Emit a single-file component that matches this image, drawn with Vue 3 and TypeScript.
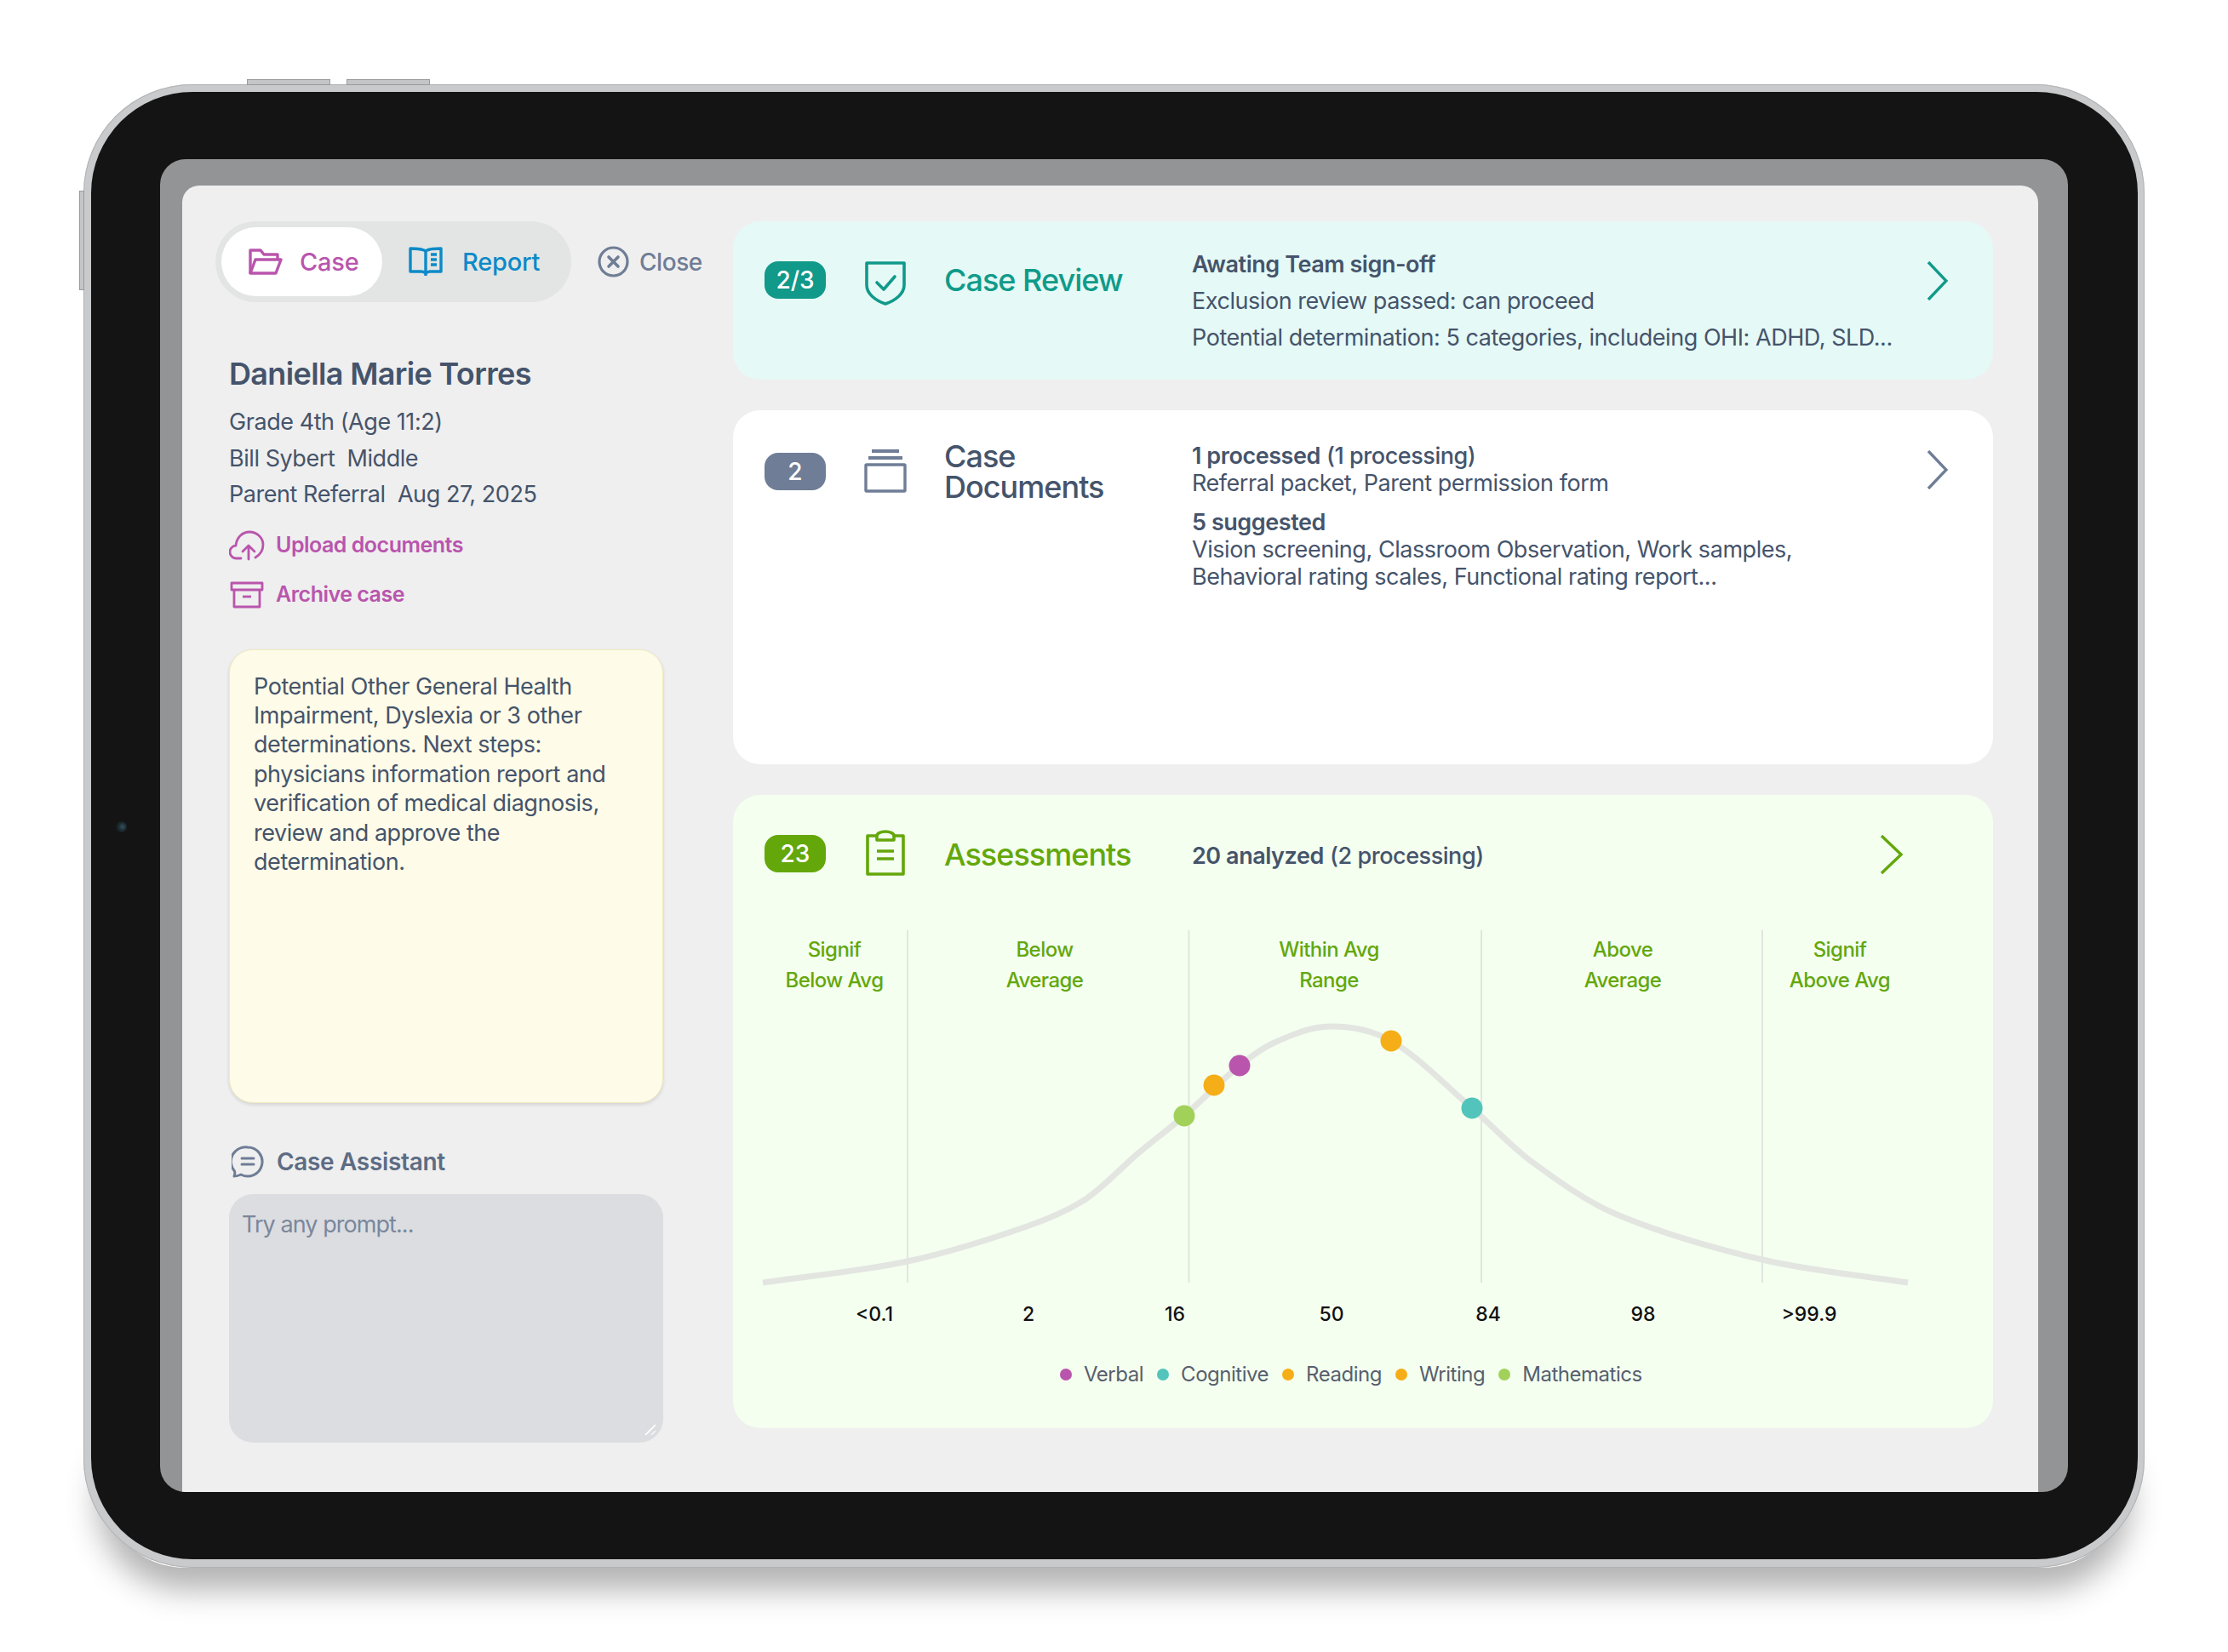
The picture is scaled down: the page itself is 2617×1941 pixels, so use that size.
<script setup lang="ts">
interface Point {
  x: number
  y: number
}

interface ScoreDot extends Point {
  color: string
}

const curvePoints: Point[] = [
  { x: 35, y: 414 },
  { x: 205, y: 389 },
  { x: 345, y: 348 },
  { x: 414, y: 316 },
  { x: 477, y: 261 },
  { x: 530, y: 218 },
  { x: 595, y: 159 },
  { x: 638, y: 131 },
  { x: 701, y: 113 },
  { x: 773, y: 130 },
  { x: 868, y: 209 },
  { x: 937, y: 271 },
  { x: 1036, y: 333 },
  { x: 1209, y: 387 },
  { x: 1380, y: 414 },
]

// hermite spline, tangents from the neighbouring points
const slope = (i: number): number => {
  const a = curvePoints[Math.max(i - 1, 0)]
  const b = curvePoints[Math.min(i + 1, curvePoints.length - 1)]
  return (b.y - a.y) / (b.x - a.x)
}

const curvePath = curvePoints.reduce((d, p, i, pts) => {
  if (i === 0) return `M${p.x} ${p.y}`
  const prev = pts[i - 1]
  const dx = (p.x - prev.x) / 3
  const c1y = prev.y + slope(i - 1) * dx
  const c2y = p.y - slope(i) * dx
  return `${d} C${prev.x + dx} ${c1y} ${p.x - dx} ${c2y} ${p.x} ${p.y}`
}, '')

const dividers = [205, 535.5, 879, 1209]

const dots: ScoreDot[] = [
  { x: 530, y: 218, color: '#a2d15a' },
  { x: 565, y: 182, color: '#f5ae17' },
  { x: 595, y: 159, color: '#b955ad' },
  { x: 773, y: 130, color: '#f5ae17' },
  { x: 868, y: 209, color: '#52c4bb' },
]

const bands = [
  { left: 119, top: 'Signif', bottom: 'Below Avg' },
  { left: 366, top: 'Below', bottom: 'Average' },
  { left: 700, top: 'Within Avg', bottom: 'Range' },
  { left: 1045, top: 'Above', bottom: 'Average' },
  { left: 1300, top: 'Signif', bottom: 'Above Avg' },
]

const ticks = [
  { left: 166, label: '<0.1' },
  { left: 347, label: '2' },
  { left: 519, label: '16' },
  { left: 703, label: '50' },
  { left: 887, label: '84' },
  { left: 1069, label: '98' },
  { left: 1264, label: '>99.9' },
]

const legend = [
  { label: 'Verbal', color: '#b955ad' },
  { label: 'Cognitive', color: '#52c4bb' },
  { label: 'Reading', color: '#f5ae17' },
  { label: 'Writing', color: '#f5ae17' },
  { label: 'Mathematics', color: '#a2d15a' },
]
</script>

<template>
  <div class="page">
    <div class="device">
      <span class="btn btn-top-a"></span>
      <span class="btn btn-top-b"></span>
      <span class="btn btn-side"></span>
      <div class="bezel">
        <span class="camera"></span>
        <div class="screen">
          <div class="app">
            <aside class="side">
              <div class="tabs-row">
                <div class="tabs">
                  <div class="tab tab-active">
                    <svg width="40" height="31" viewBox="0 0 40 31" fill="none" stroke="#b955ad" stroke-width="3.4" stroke-linejoin="round">
                      <path d="M2 29V2h12l4 5h16v6" />
                      <path d="M2 29h30l6-16H8L2 29z" />
                    </svg>
                    <span>Case</span>
                  </div>
                  <div class="tab tab-report">
                    <svg width="40" height="36" viewBox="0 0 40 36" fill="none" stroke="#0c8ac9" stroke-width="3.4" stroke-linejoin="round">
                      <path d="M20 5C16 2 8 2 2 2v27h13c2 0 4 1 5 2 1-1 3-2 5-2h13V2c-6 0-14 0-18 3z" />
                      <path d="M20 5v26M20 31v3" />
                      <path d="M26 9h7M26 15h7M26 21h7" stroke-width="3.6" />
                    </svg>
                    <span>Report</span>
                  </div>
                </div>
                <div class="close">
                  <svg width="37" height="37" viewBox="0 0 37 37" fill="none" stroke="#6f7d96" stroke-width="3.2" stroke-linecap="round">
                    <circle cx="18.5" cy="18.5" r="16.5" />
                    <path d="M13 13l11 11M24 13L13 24" stroke-width="3.6" />
                  </svg>
                  <span>Close</span>
                </div>
              </div>

              <div class="info">
                <h1 class="name">Daniella Marie Torres</h1>
                <p>Grade 4th (Age 11:2)</p>
                <p>Bill Sybert&nbsp; Middle</p>
                <p>Parent Referral&nbsp; Aug 27, 2025</p>
                <div class="link link-upload">
                  <svg width="42" height="36" viewBox="0 0 42 36" fill="none" stroke="#b955ad" stroke-width="2.8" stroke-linecap="round" stroke-linejoin="round">
                    <path d="M14 33H9a7.5 7.5 0 0 1-1-15C9 8 16 2 24 2c9 0 16 7 16 15 0 7-4 12-9 15" />
                    <path d="M23 34V19M16 25l7-7 7 7" />
                  </svg>
                  <span>Upload documents</span>
                </div>
                <div class="link">
                  <svg width="42" height="32" viewBox="0 0 42 32" fill="none" stroke="#b955ad" stroke-width="2.8" stroke-linejoin="round">
                    <rect x="3" y="2" width="36" height="8" />
                    <path d="M6 10v20h30V10" />
                    <path d="M16 18h10" />
                  </svg>
                  <span>Archive case</span>
                </div>
              </div>

              <div class="note">
                Potential Other General Health Impairment, Dyslexia or 3 other determinations. Next steps: physicians information report and verification of medical diagnosis, review and approve the determination.
              </div>

              <div class="assistant-head">
                <svg width="38" height="38" viewBox="0 0 38 38" fill="none" stroke="#6f7d96" stroke-width="3" stroke-linecap="round" stroke-linejoin="round">
                  <path d="M19 2a17 17 0 1 1-8 32c-2 1-5 2-8 2 1-2 1-4 .5-6A17 17 0 0 1 19 2z" />
                  <path d="M12 15h14M12 22h14" />
                </svg>
                <span>Case Assistant</span>
              </div>
              <div class="prompt-wrap">
                <textarea class="prompt" placeholder="Try any prompt..."></textarea>
                <svg class="grip" width="14" height="14" viewBox="0 0 14 14" fill="none" stroke-width="1.6">
                  <path d="M1 13L13 1" stroke="#fff" />
                  <path d="M8 13l5-5" stroke="#f4f4f5" />
                </svg>
              </div>
            </aside>

            <main class="cards">
              <section class="card card-review">
                <span class="badge">2/3</span>
                <svg class="card-icon" width="50" height="52" viewBox="0 0 50 52" fill="none" stroke="#11998a" stroke-width="3.6" stroke-linejoin="round">
                  <path d="M3 2h44v26c0 10-10 18-22 22C13 46 3 38 3 28V2z" />
                  <path d="M15 25l8 8 13-15" stroke-linecap="round" />
                </svg>
                <h2 class="card-title">Case Review</h2>
                <div class="card-body lined">
                  <p class="strong">Awating Team sign-off</p>
                  <p>Exclusion review passed: can proceed</p>
                  <p>Potential determination: 5 categories, includeing OHI: ADHD, SLD...</p>
                </div>
                <svg class="chevron" width="25" height="46" viewBox="0 0 25 46" fill="none" stroke="#11998a" stroke-width="3.4">
                  <path d="M2 1l21 22L2 45" />
                </svg>
              </section>

              <section class="card card-docs">
                <span class="badge">2</span>
                <svg class="card-icon" width="50" height="52" viewBox="0 0 50 52" fill="none" stroke="#6f7d96" stroke-width="3.4">
                  <path d="M9 3h32M5 11h40" stroke-width="3.8" />
                  <rect x="2" y="19" width="46" height="31" rx="1" />
                </svg>
                <h2 class="card-title">Case<br />Documents</h2>
                <div class="card-body tight">
                  <div class="group">
                    <p><b>1 processed</b> <span class="medium">(1 processing)</span></p>
                    <p>Referral packet, Parent permission form</p>
                  </div>
                  <div class="group">
                    <p class="strong">5 suggested</p>
                    <p>Vision screening, Classroom Observation, Work samples,</p>
                    <p>Behavioral rating scales, Functional rating report...</p>
                  </div>
                </div>
                <svg class="chevron" width="25" height="46" viewBox="0 0 25 46" fill="none" stroke="#6f7d96" stroke-width="3.4">
                  <path d="M2 1l21 22L2 45" />
                </svg>
              </section>

              <section class="card-assess">
                <div class="card assess-head">
                  <span class="badge">23</span>
                  <svg class="card-icon" width="50" height="54" viewBox="0 0 50 54" fill="none" stroke="#64a70b" stroke-width="3.6" stroke-linejoin="round">
                    <path d="M15 7H4v45h42V7H35" />
                    <path d="M15 12V7c0-3 5-5 10-5s10 2 10 5v5H15z" />
                    <path d="M15 25h20M15 34h20" />
                  </svg>
                  <h2 class="card-title">Assessments</h2>
                  <div class="card-body assess-body">
                    <p><b>20 analyzed</b> <span class="medium">(2 processing)</span></p>
                  </div>
                  <svg class="chevron" width="27" height="46" viewBox="0 0 27 46" fill="none" stroke="#64a70b" stroke-width="3.4">
                    <path d="M2 1l23 22L2 45" />
                  </svg>
                </div>

                <div class="chart">
                  <svg class="chart-svg" width="1480" height="478" viewBox="0 0 1480 478" fill="none">
                    <line v-for="x in dividers" :key="x" :x1="x" :x2="x" y1="0" y2="414" stroke="#e2e5e0" stroke-width="2" />
                    <path :d="curvePath" stroke="#e3e5e1" stroke-width="7" />
                    <circle v-for="d in dots" :key="d.x" :cx="d.x" :cy="d.y" r="12.5" :fill="d.color" />
                  </svg>
                  <div v-for="b in bands" :key="b.left" class="band" :style="{ left: b.left + 'px' }">
                    {{ b.top }}<br />{{ b.bottom }}
                  </div>
                  <div v-for="t in ticks" :key="t.label" class="tick" :style="{ left: t.left + 'px' }">{{ t.label }}</div>
                </div>

                <ul class="legend">
                  <li v-for="l in legend" :key="l.label">
                    <i :style="{ background: l.color }"></i>{{ l.label }}
                  </li>
                </ul>
              </section>
            </main>
          </div>
        </div>
      </div>
    </div>
  </div>
</template>

<style>
body {
  margin: 0;
  background: #fff;
}
</style>

<style scoped>
.page {
  width: 2617px;
  height: 1941px;
  padding: 99px 0 0 98px;
  box-sizing: border-box;
  overflow: hidden;
  font-family: Inter, 'Liberation Sans', sans-serif;
  letter-spacing: -0.028em;
  color: #45546b;
}
.device {
  position: relative;
  width: 2421px;
  height: 1743px;
  padding: 9px 8px 10px 9px;
  box-sizing: border-box;
  border-radius: 128px;
  background: #c9cacb;
  box-shadow: inset 0 0 0 1px #b2b3b5;
}
.device::before {
  content: '';
  position: absolute;
  z-index: -1;
  left: 20px;
  right: 20px;
  bottom: 0;
  height: 200px;
  border-radius: 120px;
  box-shadow: 0 22px 36px 4px rgba(0, 0, 0, 0.3);
}
.btn {
  position: absolute;
  background: #c4c5c7;
  border: 1px solid #9a9b9d;
  box-sizing: border-box;
}
.btn-top-a {
  left: 192px;
  top: -6px;
  width: 98px;
  height: 7px;
}
.btn-top-b {
  left: 309px;
  top: -6px;
  width: 98px;
  height: 7px;
}
.btn-side {
  left: -5px;
  top: 125px;
  width: 6px;
  height: 117px;
}
.bezel {
  position: relative;
  height: 100%;
  box-sizing: border-box;
  padding: 79px 82px 79px 81px;
  border-radius: 119px;
  background: #141414;
}
.camera {
  position: absolute;
  left: 29px;
  top: 857px;
  width: 13px;
  height: 13px;
  border-radius: 50%;
  background: radial-gradient(circle at 60% 50%, #35505c 0, #1d2a30 45%, #0d0d0d 100%);
}
.screen {
  height: 100%;
  box-sizing: border-box;
  padding: 31px 35px 0 26px;
  border-radius: 30px;
  background: #939495;
  overflow: hidden;
}
.app {
  display: flex;
  height: 100%;
  box-sizing: border-box;
  padding: 42px 53px 0 39px;
  border-radius: 20px 20px 0 0;
  background: #efefef;
}

/* left column */
.side {
  width: 608px;
  flex: none;
}
.tabs-row {
  display: flex;
  align-items: center;
  height: 95px;
}
.tabs {
  display: flex;
  align-items: center;
  width: 418px;
  height: 95px;
  padding-left: 7px;
  box-sizing: border-box;
  border-radius: 48px;
  background: #e2e5e3;
}
.tab {
  display: flex;
  align-items: center;
  height: 81px;
  font-size: 29px;
  font-weight: 500;
  letter-spacing: -0.008em;
}
.tab-active {
  width: 189px;
  padding-left: 32px;
  gap: 20px;
  box-sizing: border-box;
  border-radius: 41px;
  background: #fff;
  color: #b955ad;
}
.tab-report {
  padding-left: 31px;
  gap: 23px;
  color: #0c8ac9;
}
.close {
  display: flex;
  align-items: center;
  gap: 12px;
  margin-left: 31px;
  font-size: 28px;
  font-weight: 500;
  color: #6f7d96;
}
.info {
  padding-left: 16px;
  margin-top: 62px;
  font-size: 27px;
  line-height: 42.5px;
}
.info p {
  margin: 0;
}
.name {
  margin: 0 0 14px;
  font-size: 36px;
  line-height: 44px;
  font-weight: 600;
  letter-spacing: -0.018em;
}
.link {
  display: flex;
  align-items: center;
  gap: 13px;
  height: 40px;
  margin-top: 18px;
  font-size: 25px;
  font-weight: 600;
  letter-spacing: -0.02em;
  color: #b955ad;
}
.note {
  width: 510px;
  height: 533px;
  margin: 44px 0 0 16px;
  padding: 26px 28px;
  box-sizing: border-box;
  border: 1px solid #f1ebbf;
  border-radius: 28px;
  background: #fefbe8;
  box-shadow: 0 2px 4px rgba(0, 0, 0, 0.12);
  font-size: 27px;
  line-height: 34.4px;
}
.assistant-head {
  display: flex;
  align-items: center;
  gap: 15px;
  height: 40px;
  margin: 49px 0 18px 19px;
  font-size: 28px;
  font-weight: 600;
  letter-spacing: -0.012em;
  color: #5d6c84;
}
.prompt-wrap {
  position: relative;
  width: 510px;
  height: 292px;
  margin-left: 16px;
}
.prompt {
  display: block;
  width: 100%;
  height: 100%;
  padding: 19px 15px;
  box-sizing: border-box;
  border: 0;
  border-radius: 28px;
  outline: none;
  resize: none;
  background: #dcdde0;
  font-family: inherit;
  font-size: 27px;
  line-height: 34px;
  letter-spacing: -0.035em;
  color: #45546b;
}
.prompt::placeholder {
  color: #7b879c;
}
.grip {
  position: absolute;
  right: 8px;
  bottom: 8px;
}

/* right column */
.cards {
  width: 1480px;
  flex: none;
  display: flex;
  flex-direction: column;
  gap: 36px;
}
.card {
  display: flex;
  align-items: flex-start;
  padding-left: 37px;
  padding-right: 53px;
}
.card-review {
  height: 186px;
  box-sizing: border-box;
  padding-top: 47px;
  border-radius: 32px;
  background: #e5f9f6;
}
.card-docs {
  height: 416px;
  box-sizing: border-box;
  padding-top: 50px;
  border-radius: 32px;
  background: #fff;
}
.card-assess {
  height: 744px;
  box-sizing: border-box;
  padding-top: 47px;
  border-radius: 32px;
  background: #f4fff0;
}
.badge {
  flex: none;
  width: 72px;
  height: 44px;
  border-radius: 16px;
  text-align: center;
  font-size: 28px;
  line-height: 44px;
  font-weight: 500;
  letter-spacing: 0;
  color: #fff;
}
.card-review .badge {
  background: #11998a;
}
.card-docs .badge {
  background: #6f7d96;
}
.assess-head .badge {
  background: #64a70b;
}
.card-icon {
  flex: none;
  margin-left: 45px;
}
.card-docs .card-icon {
  margin-top: -5px;
}
.card-title {
  flex: none;
  width: 291px;
  margin: 0 0 0 44px;
  font-size: 36px;
  line-height: 36px;
  font-weight: 500;
  letter-spacing: -0.027em;
}
.card-review .card-title {
  padding-top: 4px;
  color: #0f9b8a;
}
.card-docs .card-title {
  margin-top: -14px;
  color: #45546b;
}
.card-body {
  flex: 1;
  font-size: 27px;
  min-width: 0;
}
.card-body p {
  margin: 0;
}
.lined {
  margin-top: -18px;
  line-height: 43px;
}
.tight {
  margin-top: -12px;
  line-height: 32px;
}
.group + .group {
  margin-top: 14px;
}
.strong,
b {
  font-weight: 600;
}
.medium {
  font-weight: 500;
}
.chevron {
  flex: none;
}
.card-docs .chevron {
  margin-top: -3px;
}
.assess-head {
  height: 46px;
  padding-right: 106px;
}
.assess-head .card-title {
  padding-top: 5px;
  color: #64a70b;
}
.assess-body {
  padding-top: 9px;
  line-height: 32px;
  font-size: 27px;
}
.assess-head .card-icon {
  margin-top: -6px;
}
.chart {
  position: relative;
  height: 478px;
  margin-top: 66px;
}
.chart-svg {
  position: absolute;
  left: 0;
  top: 0;
}
.band {
  position: absolute;
  top: 5px;
  transform: translateX(-50%);
  white-space: nowrap;
  text-align: center;
  font-size: 24px;
  line-height: 36px;
  font-weight: 500;
  letter-spacing: -0.023em;
  color: #64a70b;
}
.tick {
  position: absolute;
  top: 437px;
  transform: translateX(-50%);
  font-size: 23px;
  line-height: 28px;
  font-weight: 500;
  letter-spacing: 0;
  color: #111;
}
.legend {
  display: flex;
  justify-content: flex-start;
  gap: 16px;
  list-style: none;
  margin: 30px 0 0;
  padding: 0 0 0 384px;
  font-size: 24px;
  line-height: 28px;
  letter-spacing: -0.02em;
  color: #585f6d;
}
.legend li {
  display: flex;
  align-items: center;
}
.legend i {
  width: 14px;
  height: 14px;
  margin-right: 14px;
  border-radius: 50%;
}
</style>
